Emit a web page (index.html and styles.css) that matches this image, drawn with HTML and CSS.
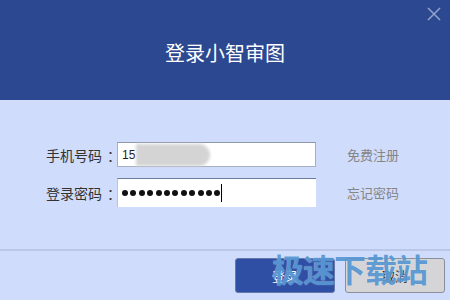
FILE: index.html
```html
<!DOCTYPE html>
<html lang="zh">
<head>
<meta charset="utf-8">
<link rel="stylesheet" href="styles.css">
</head>
<body>
<div class="dialog">
  <header class="head">
    <h1 class="title">登录小智审图</h1>
    <svg class="close" width="14" height="14" viewBox="0 0 14 14"><path d="M1 1L13 13M13 1L1 13" stroke="#8fa0cc" stroke-width="1.6"/></svg>
  </header>
  <main class="form">
    <div class="row">
      <label class="label">手机号码<span class="colon">：</span></label>
      <div class="field f1"><span class="val">15</span><span class="blur"></span></div>
      <a class="link">免费注册</a>
    </div>
    <div class="row">
      <label class="label">登录密码<span class="colon">：</span></label>
      <div class="field f2">
        <span class="dots"><i></i><i></i><i></i><i></i><i></i><i></i><i></i><i></i><i></i><i></i><i></i><i></i></span><span class="caret"></span>
      </div>
      <a class="link">忘记密码</a>
    </div>
  </main>
  <footer class="foot">
    <button class="btn ok">登录</button>
    <button class="btn cancel">取消</button>
    <div class="mark">极速下载站</div>
  </footer>
</div>
</body>
</html>
```
FILE: styles.css
```css
* { box-sizing: border-box; }
html, body { margin: 0; padding: 0; }
body {
  width: 450px; height: 300px; overflow: hidden;
  font-family: "Noto Sans CJK SC", "Noto Sans", sans-serif;
  background: #d0dcfb;
}
.dialog { width: 450px; height: 300px; position: relative; display: flex; flex-direction: column; }
.head {
  height: 100px; background: #2b4891;
  display: flex; align-items: center; justify-content: center;
  position: relative;
}
.title {
  margin: 0; margin-top: 4px;
  font-size: 20px; font-weight: normal; color: #ffffff; letter-spacing: 0;
}
.close { position: absolute; right: 9px; top: 7px; }
.form {
  height: 149px; padding-top: 42px;
  display: flex; flex-direction: column; gap: 11px;
}
.row { display: flex; align-items: center; }
.row:first-child { height: 25px; }
.row:last-child { height: 29px; }
.label {
  width: 117px; text-align: right; padding-right: 1px;
  font-size: 14px; color: #333; line-height: 1;
}
.colon { display: inline-block; padding-left: 5px; margin-right: -5px; }
.field {
  width: 199px; height: 100%; background: #fff;
  display: flex; align-items: center; padding-left: 4px;
}
.f1 { border: 1px solid #a7b0c0; border-top-color: #8e98ab; }
.f2 { border-top: 1px solid #6a7c9e; border-left: 1px solid #b9c4da; }
.val { font-size: 12px; color: #222; font-family: "Liberation Sans", sans-serif; }
.blur {
  display: inline-block; width: 74px; height: 22px; margin-left: 1px;
  background: #d4d4d4; border-radius: 0 11px 11px 0;
  filter: blur(1.5px);
}
.dots { display: flex; gap: 2.4px; }
.dots i { display: block; width: 6px; height: 6px; border-radius: 50%; background: #111; }
.caret { width: 1px; height: 18px; background: #000; margin-left: 1px; }
.link { margin-left: 31px; font-size: 13px; color: #858585; }
.foot {
  flex: 1; border-top: 2px solid #bac7e9;
  display: flex; justify-content: flex-end; align-items: flex-start;
  padding-top: 7px; padding-right: 5px; gap: 10px;
  position: relative;
}
.btn {
  width: 100px; height: 35px; font-family: inherit; font-size: 13px;
  border-radius: 3px; padding: 0;
}
.ok { background: #2f4fa5; color: #fff; border: 1px solid #6677aa; }
.cancel { background: #d5d5d8; color: #333; border: 1px solid #8a8f99; }
.mark {
  position: absolute; left: 272px; top: 1px;
  font-size: 32px; line-height: 1; letter-spacing: -1px;
  color: rgba(70, 140, 205, 0.85);
  font-weight: bold;
  text-shadow: 0 0 1px rgba(255,255,255,0.6);
}
```
